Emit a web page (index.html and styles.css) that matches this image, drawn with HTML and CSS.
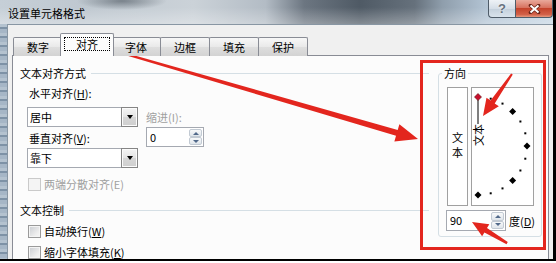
FILE: index.html
```html
<!DOCTYPE html>
<html lang="zh-CN">
<head>
    <meta charset="UTF-8">
    <meta name="viewport" content="width=device-width, initial-scale=1.0">
    <title>设置单元格格式</title>
    <link rel="stylesheet" href="styles.css">
</head>
<body>
    <div class="window">
        <div class="titlebar">
            <span class="title">设置单元格格式</span>
            <div class="caption">
                <span class="cap-btn help">?</span>
                <span class="cap-btn close">
                    <svg width="13" height="10" viewBox="0 0 13 10">
                        <path d="M2.5 1.5L10.5 8.5M10.5 1.5L2.5 8.5" stroke="#6b2418" stroke-width="3.6" stroke-linecap="round"/>
                        <path d="M2.5 1.5L10.5 8.5M10.5 1.5L2.5 8.5" stroke="#fff" stroke-width="2"/>
                    </svg>
                </span>
            </div>
        </div>
        <div class="frame">
            <div class="dialog">
                <div class="tabs">
                    <div class="tab">数字</div>
                    <div class="tab active"><span class="focus">对齐</span></div>
                    <div class="tab">字体</div>
                    <div class="tab">边框</div>
                    <div class="tab">填充</div>
                    <div class="tab">保护</div>
                </div>
                <div class="panel">
                    <div class="left">
                        <div class="group-title">文本对齐方式</div>
                        <div class="align">
                            <div class="col">
                                <div class="label">水平对齐(<u>H</u>):</div>
                                <div class="combo"><span class="value">居中</span><span class="drop"></span></div>
                                <div class="label label-v">垂直对齐(<u>V</u>):</div>
                                <div class="combo combo-v"><span class="value">靠下</span><span class="drop"></span></div>
                            </div>
                            <div class="col indent">
                                <div class="label disabled">缩进(I):</div>
                                <div class="spin"><span class="value">0</span><span class="spin-btns"><i class="up"></i><i class="down"></i></span></div>
                            </div>
                        </div>
                        <div class="check check-first disabled"><span class="box"></span>两端分散对齐(E)</div>
                        <div class="group-title group-second">文本控制</div>
                        <div class="check"><span class="box"></span>自动换行(<u>W</u>)</div>
                        <div class="check"><span class="box"></span>缩小字体填充(<u>K</u>)</div>
                    </div>

                    <fieldset class="orient">
                        <legend>方向</legend>
                        <div class="orient-boxes">
                            <div class="vbox">文本</div>
                            <div class="dial">
                                <svg width="61" height="117" viewBox="0 0 61 117">
                                    <defs>
                                        <path id="dm" d="M0 -3.5L3.5 0 0 3.5 -3.5 0z"/>
                                    </defs>
                                    <line x1="6" y1="12" x2="6" y2="36" stroke="#000" stroke-width="1"/>
                                    <text class="dial-text" transform="translate(6 58) rotate(-90)" x="0" y="0">文本</text>
                                    <g fill="#000">
                                        <rect x="17.7" y="9.7" width="2" height="2"/>
                                        <rect x="29.5" y="14.6" width="2" height="2"/>
                                        <use href="#dm" x="40.6" y="23.4"/>
                                        <rect x="47.4" y="32.5" width="2" height="2"/>
                                        <rect x="52.3" y="44.3" width="2" height="2"/>
                                        <use href="#dm" x="55" y="58"/>
                                        <rect x="52.3" y="69.7" width="2" height="2"/>
                                        <rect x="47.4" y="81.5" width="2" height="2"/>
                                        <use href="#dm" x="40.6" y="92.6"/>
                                        <rect x="29.5" y="99.4" width="2" height="2"/>
                                        <rect x="17.7" y="104.3" width="2" height="2"/>
                                        <use href="#dm" x="6" y="107"/>
                                    </g>
                                    <use href="#dm" x="6" y="9" fill="#c8102e" stroke="#5a0a0a" stroke-width="0.6"/>
                                </svg>
                            </div>
                        </div>
                        <div class="spin-row">
                            <div class="spin spin-deg"><span class="value">90</span><span class="spin-btns"><i class="up"></i><i class="down"></i></span></div>
                            <span>度(<u>D</u>)</span>
                        </div>
                    </fieldset>
                </div>
            </div>
        </div>
    </div>

    <!-- red annotation marks drawn over the dialog -->
    <svg class="marks" width="556" height="263" viewBox="0 0 556 263">
        <rect x="421.5" y="61.5" width="123" height="187" fill="none" stroke="#e3261e" stroke-width="3"/>
        <g fill="#e3261e">
            <polygon transform="translate(418 139) rotate(16.2)" points="-333,-0.9 -22,-3 -22,-9 0,0 -22,9 -22,3 -333,0.9"/>
            <polygon transform="translate(483 116) rotate(124.6)" points="-51,-1 -17,-2.5 -17,-7.5 0,0 -17,7.5 -17,2.5 -51,1"/>
            <polygon transform="translate(472 222) rotate(211)" points="-41,-1.2 -16,-2.5 -16,-7 0,0 -16,7 -16,2.5 -41,1.2"/>
        </g>
    </svg>
</body>
</html>
```

FILE: styles.css
```css
* {
    box-sizing: border-box;
}

body {
    margin: 0;
    width: 556px;
    height: 263px;
    overflow: hidden;
    position: relative;
    background: #fff;
    font-family: "Noto Sans CJK SC", "Microsoft YaHei", sans-serif;
    font-size: 11px;
    color: #000;
}

.window {
    width: 556px;
    height: 261px;
    border-right: 3px solid #000;
    border-bottom: 2px solid #000;
    display: flex;
    flex-direction: column;
}

/* title bar */
.titlebar {
    height: 24px;
    flex: none;
    display: flex;
    justify-content: space-between;
    align-items: flex-start;
    background:
        radial-gradient(ellipse 45px 9px at 122px 1px, rgba(60,70,80,0.55), rgba(60,70,80,0)),
        linear-gradient(to bottom, rgba(255,255,255,0) 30%, rgba(255,255,255,0.3) 100%),
        linear-gradient(to right, #c6cfd7 0, #bfc8d0 15%, #cbd2d8 35%, #b3bcc5 48%, #6c7681 55%, #4f5a65 65%, #66717c 75%, #8f9eac 80%, #b3c4d4 88%, #c6d6e4 100%);
}

.title {
    padding: 6px 0 0 8px;
    line-height: 14px;
}

.caption {
    display: flex;
}

.cap-btn {
    height: 18px;
    display: flex;
    align-items: center;
    justify-content: center;
    border: 1px solid #4f5c69;
    border-top: none;
}

.help {
    width: 27px;
    border-radius: 0 0 0 4px;
    border-right: none;
    background: linear-gradient(#eef2f6, #d5dee7 50%, #c3cfdb 51%, #d9e3ec);
    color: #67727e;
    font-family: "Liberation Sans", sans-serif;
    font-weight: bold;
    font-size: 13px;
    text-shadow: 0 0 2px #fff;
}

.close {
    width: 38px;
    border-radius: 0 0 4px 0;
    background: linear-gradient(#e9a99b, #d7725f 45%, #c4432b 50%, #d26048 85%, #e79a7f);
}

.close svg {
    display: block;
}

/* frame + dialog body */
.frame {
    flex: 1;
    display: flex;
    padding-left: 7px;
    min-height: 0;
    background: repeating-linear-gradient(to bottom, #b4c2cf 0, #b4c2cf 3px, #7e92a6 3px, #7e92a6 5px, #a6b6c6 5px, #a6b6c6 9px);
}

.dialog {
    flex: 1;
    display: flex;
    flex-direction: column;
    overflow: hidden;
    background: #f0f0f0;
    border-top: 1px solid #8896a3;
    border-left: 1px solid #8896a3;
    padding: 8px 4px 0 4px;
}

/* tabs */
.tabs {
    display: flex;
    align-items: flex-end;
    height: 23px;
    margin: 0 0 -1px 1px;
    position: relative;
    z-index: 1;
}

.tab {
    width: 50px;
    height: 19px;
    margin-right: -1px;
    border: 1px solid #898c95;
    border-bottom: none;
    border-radius: 2px 2px 0 0;
    background: linear-gradient(#f7f7f7, #e9e9e9 50%, #dedede 51%, #d3d3d3);
    text-align: center;
    line-height: 18px;
}

.tab.active {
    width: 54px;
    height: 23px;
    margin: 0 -3px 0 -2px;
    background: #fcfcfc;
    position: relative;
    z-index: 2;
}

.focus {
    display: block;
    height: 14px;
    margin: 3px 3px 0;
    border: 1px dotted #000;
    line-height: 12px;
}

/* tab page */
.panel {
    flex: 1;
    display: flex;
    gap: 9px;
    padding: 10px 5px 0 7px;
    background: #fcfcfc;
    border: 1px solid #898c95;
    border-bottom: none;
}

.left {
    width: 409px;
}

.group-title {
    display: flex;
    align-items: center;
    height: 14px;
    line-height: 14px;
}

.group-title::after {
    content: "";
    flex: 1;
    margin-left: 5px;
    border-top: 1px solid #d5dfe5;
}

.group-second {
    margin-top: 12px;
}

.align {
    display: flex;
    gap: 8px;
    margin-top: 6px;
    padding-left: 7px;
}

.col {
    display: flex;
    flex-direction: column;
    width: 111px;
}

.label {
    line-height: 14px;
    padding-left: 2px;
}

.label-v {
    margin-top: 4px;
}

.disabled {
    color: #a0a0a0;
}

.combo {
    display: flex;
    height: 20px;
    margin-top: 7px;
    border: 1px solid #a5a9b1;
    background: #fff;
}

.combo-v {
    margin-top: 3px;
}

.value {
    flex: 1;
    line-height: 18px;
    padding-left: 2px;
}

.drop {
    width: 17px;
    margin: -1px -1px -1px 0;
    border: 1px solid #858585;
    background: linear-gradient(#f4f4f4, #e4e4e4 50%, #d6d6d6 51%, #cfcfcf);
    box-shadow: inset 0 0 0 1px #fbfbfb;
    display: flex;
    align-items: center;
    justify-content: center;
}

.drop::after {
    content: "";
    border-left: 3.5px solid transparent;
    border-right: 3.5px solid transparent;
    border-top: 4px solid #000;
}

.indent {
    width: 58px;
}

.indent .label {
    margin-top: 24px;
    padding-left: 0;
}

.spin {
    display: flex;
    height: 20px;
    margin-top: 3px;
    border: 1px solid #a5a9b1;
    background: #fff;
}

.spin .value {
    padding-left: 3px;
}

.spin-btns {
    width: 15px;
    display: flex;
    flex-direction: column;
    padding: 1px;
}

.spin-btns i {
    flex: 1;
    display: flex;
    align-items: center;
    justify-content: center;
    border: 1px solid #c2cad3;
    border-radius: 2px;
    background: linear-gradient(#f8f9fa, #dfe5eb);
}

.spin-btns .up::after {
    content: "";
    border-left: 3px solid transparent;
    border-right: 3px solid transparent;
    border-bottom: 3px solid #51698a;
}

.spin-btns .down::after {
    content: "";
    border-left: 3px solid transparent;
    border-right: 3px solid transparent;
    border-top: 3px solid #51698a;
}

/* checkboxes */
.check {
    display: flex;
    align-items: center;
    height: 14px;
    margin-top: 7px;
    padding-left: 8px;
    line-height: 14px;
}

.check-first {
    margin-top: 9px;
}

.box {
    width: 13px;
    height: 13px;
    margin-right: 3px;
    border: 1px solid #9a9a9a;
    background: linear-gradient(135deg, #c9ccd1, #eeeeee 70%, #f6f6f6);
    box-shadow: inset 0 0 0 1px #f4f4f4;
}

.check.disabled .box {
    border-color: #cacaca;
    background: #f4f4f4;
}

/* orientation group */
.orient {
    width: 104px;
    margin: 0;
    padding: 0 5px 5px 8px;
    border: 1px solid #d5dfe5;
    border-radius: 3px;
    align-self: flex-start;
}

.orient legend {
    padding: 0 2px;
    margin-left: -5px;
    line-height: 14px;
}

.orient-boxes {
    display: flex;
    gap: 3px;
    height: 119px;
    margin-top: 7px;
}

.vbox {
    width: 21px;
    border: 1px solid #a0a0a0;
    background: #fff;
    display: flex;
    align-items: center;
    justify-content: center;
    writing-mode: vertical-rl;
    text-orientation: upright;
    letter-spacing: 4px;
}

.dial {
    width: 63px;
    border: 1px solid #a0a0a0;
    background: #fff;
}

.dial svg {
    display: block;
}

.dial-text {
    font-family: "Noto Sans CJK SC", sans-serif;
    font-size: 11px;
    dominant-baseline: central;
}

.spin-row {
    display: flex;
    align-items: center;
    gap: 3px;
    margin: 4px 0 0 -1px;
}

.spin-deg {
    width: 60px;
    height: 21px;
    margin-top: 0;
}

/* annotations */
.marks {
    position: absolute;
    top: 0;
    left: 0;
    pointer-events: none;
}
```
